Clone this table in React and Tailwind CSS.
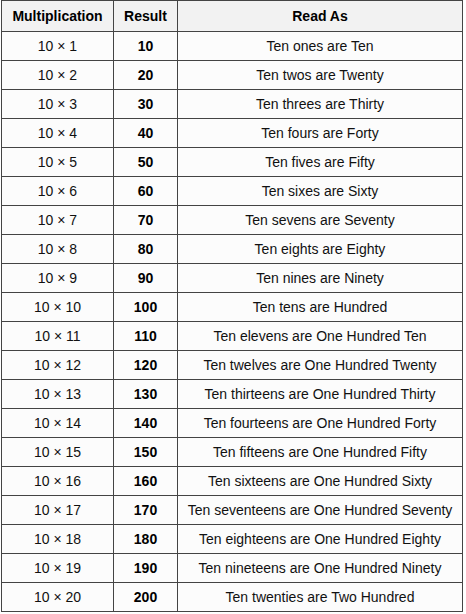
import React from "react";

const names = [
  ["ones", "Ten"],
  ["twos", "Twenty"],
  ["threes", "Thirty"],
  ["fours", "Forty"],
  ["fives", "Fifty"],
  ["sixes", "Sixty"],
  ["sevens", "Seventy"],
  ["eights", "Eighty"],
  ["nines", "Ninety"],
  ["tens", "Hundred"],
  ["elevens", "One Hundred Ten"],
  ["twelves", "One Hundred Twenty"],
  ["thirteens", "One Hundred Thirty"],
  ["fourteens", "One Hundred Forty"],
  ["fifteens", "One Hundred Fifty"],
  ["sixteens", "One Hundred Sixty"],
  ["seventeens", "One Hundred Seventy"],
  ["eighteens", "One Hundred Eighty"],
  ["nineteens", "One Hundred Ninety"],
  ["twenties", "Two Hundred"],
];

export default function App() {
  return (
    <div className="w-[466px] h-[614px] bg-white" style={{ fontFamily: '"Liberation Sans", Arial, sans-serif' }}>
      <div className="ml-[1px] w-[462px] border-t border-l border-[#444] text-[14px] text-[#111]">
        <div className="grid grid-cols-[112px_64px_285px] h-[31px] bg-[#f2f2f2] font-bold text-black">
          <div className="flex items-center justify-center border-r border-b border-[#444]">Multiplication</div>
          <div className="flex items-center justify-center border-r border-b border-[#444]">Result</div>
          <div className="flex items-center justify-center border-r border-b border-[#444]">Read As</div>
        </div>
        {names.map(([n, v], i) => (
          <div key={i} className="grid grid-cols-[112px_64px_285px] h-[29px] bg-[#fcfcfc]">
            <div className="flex items-center justify-center border-r border-b border-[#444]">10 × {i + 1}</div>
            <div className="flex items-center justify-center border-r border-b border-[#444] font-bold text-black">{(i + 1) * 10}</div>
            <div className="flex items-center justify-center border-r border-b border-[#444]">Ten {n} are {v}</div>
          </div>
        ))}
      </div>
    </div>
  );
}
